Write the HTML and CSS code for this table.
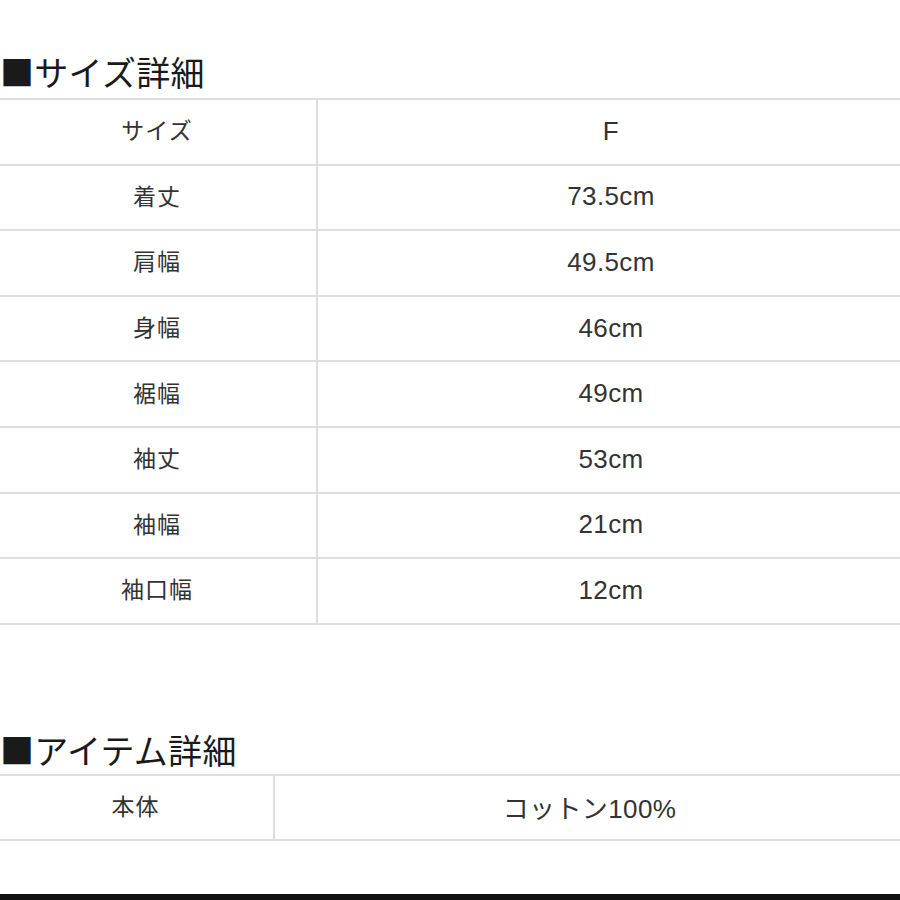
FILE: index.html
```html
<!DOCTYPE html>
<html lang="ja">
<head>
<meta charset="utf-8">
<link rel="stylesheet" href="styles.css">
</head>
<body>
<div class="page">
  <h2 class="heading heading-first">■サイズ詳細</h2>
  <div class="table size-table">
    <div class="row"><div class="cell key">サイズ</div><div class="cell val">F</div></div>
    <div class="row"><div class="cell key">着丈</div><div class="cell val">73.5cm</div></div>
    <div class="row"><div class="cell key">肩幅</div><div class="cell val">49.5cm</div></div>
    <div class="row"><div class="cell key">身幅</div><div class="cell val">46cm</div></div>
    <div class="row"><div class="cell key">裾幅</div><div class="cell val">49cm</div></div>
    <div class="row"><div class="cell key">袖丈</div><div class="cell val">53cm</div></div>
    <div class="row"><div class="cell key">袖幅</div><div class="cell val">21cm</div></div>
    <div class="row"><div class="cell key">袖口幅</div><div class="cell val">12cm</div></div>
  </div>
  <h2 class="heading heading-second">■アイテム詳細</h2>
  <div class="table item-table">
    <div class="row"><div class="cell key">本体</div><div class="cell val">コットン100%</div></div>
  </div>
  <div class="bottom-bar"></div>
</div>
</body>
</html>
```
FILE: styles.css
```css
html, body {
  margin: 0;
  padding: 0;
  background: #fff;
}
body {
  width: 900px;
  height: 900px;
  overflow: hidden;
  font-family: "Noto Sans CJK JP", "Noto Sans", sans-serif;
  color: #333;
}
.page {
  position: relative;
  height: 900px;
}
.heading {
  margin: 0;
  font-weight: 400;
  font-size: 34px;
  line-height: 40px;
  color: #1a1a1a;
  letter-spacing: 0.3px;
}
.heading-first {
  padding-top: 52px;
  height: 46px;
}
.heading-second {
  margin-top: 100px;
  height: 44px;
  padding-top: 5px;
}
.table {
  width: 906px;
  margin-left: -2px;
  border-top: 2px solid #dedede;
}
.row {
  display: grid;
  height: 63.6px;
  border-bottom: 2px solid #dedede;
}
.size-table .row {
  grid-template-columns: 320px 1fr;
}
.item-table .row {
  grid-template-columns: 277px 1fr;
  height: 63px;
}
.cell {
  display: flex;
  align-items: center;
  justify-content: center;
  font-family: "Liberation Sans", "Noto Sans CJK JP", sans-serif;
  font-size: 23px;
  letter-spacing: 1px;
  color: #333;
  padding-bottom: 5px;
  box-sizing: border-box;
}
.val {
  font-size: 26px;
  letter-spacing: 0.4px;
  padding-bottom: 1px;
}
.key {
  border-right: 2px solid #dedede;
}
.bottom-bar {
  position: absolute;
  left: 0;
  right: 0;
  top: 894px;
  height: 6px;
  background: #111;
}
```
